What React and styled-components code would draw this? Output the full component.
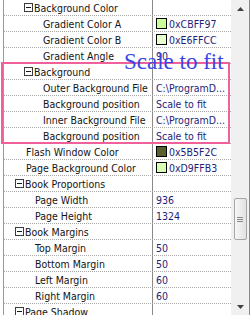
import React from 'react'
import styled, { createGlobalStyle } from 'styled-components'

const GlobalStyle = createGlobalStyle`
    body {
        margin: 0;
        background: #ffffff;
    }
`

const rows = [
    { name: 'Background Color', group: true, indent: 20 },
    { name: 'Gradient Color A', indent: 39, color: '#CBFF97', value: '0xCBFF97' },
    { name: 'Gradient Color B', indent: 39, color: '#E6FFCC', value: '0xE6FFCC' },
    { name: 'Gradient Angle', indent: 39, value: '90' },
    { name: 'Background', group: true, indent: 20 },
    { name: 'Outer Background File', indent: 39, value: 'C:\\ProgramD...' },
    { name: 'Background position', indent: 39, value: 'Scale to fit' },
    { name: 'Inner Background File', indent: 39, value: 'C:\\ProgramD...' },
    { name: 'Background position', indent: 39, value: 'Scale to fit' },
    { name: 'Flash Window Color', indent: 22, color: '#5B5F2C', value: '0x5B5F2C' },
    { name: 'Page Background Color', indent: 22, color: '#D9FFB3', value: '0xD9FFB3' },
    { name: 'Book Proportions', group: true, indent: 11 },
    { name: 'Page Width', indent: 31, value: '936' },
    { name: 'Page Height', indent: 31, value: '1324' },
    { name: 'Book Margins', group: true, indent: 11 },
    { name: 'Top Margin', indent: 31, value: '50' },
    { name: 'Bottom Margin', indent: 31, value: '50' },
    { name: 'Left Margin', indent: 31, value: '60' },
    { name: 'Right Margin', indent: 31, value: '60' },
    { name: 'Page Shadow', group: true, indent: 11 },
]

export default function App() {
    return (
        <>
            <GlobalStyle />
            <Frame>
                <Gutter />
                <Grid>
                    {rows.map((r, i) => (
                        <Row key={i}>
                            <NameCell indent={r.indent}>
                                {r.group && <Toggle />}
                                <NameText>{r.name}</NameText>
                            </NameCell>
                            <ValueCell>
                                {r.color && <Swatch fill={r.color} />}
                                {r.value}
                            </ValueCell>
                        </Row>
                    ))}
                </Grid>
                <Scrollbar>
                    <Arrow>
                        <svg width="7" height="4" viewBox="0 0 7 4"><path d="M3.5 0 L7 4 L0 4 Z" fill="#404040" /></svg>
                    </Arrow>
                    <Track>
                        <Thumb>
                            <Grip />
                            <Grip />
                            <Grip />
                        </Thumb>
                    </Track>
                    <Arrow>
                        <svg width="7" height="4" viewBox="0 0 7 4"><path d="M0 0 L7 0 L3.5 4 Z" fill="#404040" /></svg>
                    </Arrow>
                </Scrollbar>
                <RightEdge />
                <Highlight />
                <Callout>Scale to fit</Callout>
            </Frame>
        </>
    )
}

const Frame = styled.div`
    position: relative;
    width: 252px;
    height: 315px;
    overflow: hidden;
    display: flex;
    background: #ffffff;
    font-family: "DejaVu Sans Condensed", "DejaVu Sans", sans-serif;
    font-size: 10.5px;
`

const Gutter = styled.div`
    width: 3px;
    border-right: 1px solid #9a9a9a;
`

const Grid = styled.div`
    width: 228px;
    display: flex;
    flex-direction: column;
`

const Row = styled.div`
    display: flex;
    height: 15px;
    flex-shrink: 0;
    border-bottom: 1px dotted #a8a8a8;
`

const NameCell = styled.div`
    width: 149px;
    flex-shrink: 0;
    display: flex;
    align-items: center;
    padding-left: ${p => p.indent}px;
    box-sizing: border-box;
    border-right: 1px solid #8a8a8a;
    color: #141414;
    overflow: hidden;
    white-space: nowrap;
`

const NameText = styled.span`
    white-space: nowrap;
`

const Toggle = styled.span`
    position: relative;
    width: 7px;
    height: 7px;
    border: 1px solid #3a3a3a;
    margin-right: 1px;
    flex-shrink: 0;
    &::after {
        content: '';
        position: absolute;
        left: 1px;
        right: 1px;
        top: 3px;
        height: 1px;
        background: #1a1a1a;
    }
`

const ValueCell = styled.div`
    flex: 1;
    display: flex;
    align-items: center;
    padding-left: 3px;
    color: #1e1e78;
    white-space: nowrap;
    overflow: hidden;
`

const Swatch = styled.span`
    width: 9px;
    height: 9px;
    border: 1px solid #000000;
    background: ${p => p.fill};
    margin-right: 2px;
    flex-shrink: 0;
`

const Scrollbar = styled.div`
    width: 18px;
    display: flex;
    flex-direction: column;
    background: #f0f0f0;
`

const Arrow = styled.div`
    height: 17px;
    display: flex;
    align-items: center;
    justify-content: center;
`

const Track = styled.div`
    flex: 1;
    padding-top: 181px;
    display: flex;
    justify-content: center;
`

const Thumb = styled.div`
    width: 13px;
    height: 42px;
    box-sizing: border-box;
    border: 1px solid #a5a5a5;
    border-radius: 2px;
    background: linear-gradient(to right, #f6f6f6, #e2e2e2);
    display: flex;
    flex-direction: column;
    align-items: center;
    justify-content: center;
    gap: 1px;
`

const Grip = styled.span`
    width: 6px;
    height: 1px;
    background: #8a8a8a;
`

const RightEdge = styled.div`
    width: 1px;
    background: #8a8a8a;
    margin-right: 2px;
`

const Highlight = styled.div`
    position: absolute;
    left: 1px;
    top: 62px;
    width: 229px;
    height: 82px;
    box-sizing: border-box;
    border: 2px solid #f0609a;
    pointer-events: none;
`

const Callout = styled.div`
    position: absolute;
    left: 124px;
    top: 49px;
    font-family: "Liberation Serif", serif;
    font-size: 23px;
    line-height: 26px;
    color: #3a46e6;
    white-space: nowrap;
`
